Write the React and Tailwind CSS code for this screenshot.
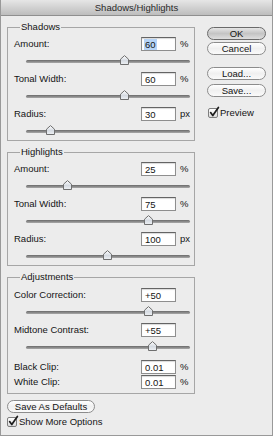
import clsx from "clsx";

const sections = [
  {
    title: "Shadows",
    rows: [
      { label: "Amount:", value: "60", unit: "%", pos: 0.6, selected: true },
      { label: "Tonal Width:", value: "60", unit: "%", pos: 0.6 },
      { label: "Radius:", value: "30", unit: "px", pos: 0.147 },
    ],
  },
  {
    title: "Highlights",
    rows: [
      { label: "Amount:", value: "25", unit: "%", pos: 0.25 },
      { label: "Tonal Width:", value: "75", unit: "%", pos: 0.75 },
      { label: "Radius:", value: "100", unit: "px", pos: 0.497 },
    ],
  },
];

const Thumb = () => (
  <svg width="9" height="10" viewBox="0 0 9 10">
    <defs>
      <linearGradient id="thumbFill" x1="0" y1="0" x2="0" y2="1">
        <stop offset="0" stopColor="#ffffff" />
        <stop offset="0.55" stopColor="#d6dbe2" />
        <stop offset="1" stopColor="#eef1f4" />
      </linearGradient>
    </defs>
    <path
      d="M0.5 9.5 V4.2 L4.5 0.6 L8.5 4.2 V9.5 Z"
      fill="url(#thumbFill)"
      stroke="#6f6f6f"
      strokeWidth="1"
      strokeLinejoin="round"
    />
  </svg>
);

const Slider = ({ pos, className }) => (
  <div className={clsx("relative ml-[12px] w-[164px] pt-[9px]", className)}>
    <div className="h-[3px] rounded-full bg-linear-to-b from-[#6a6a6a] to-[#a9a9a9]" />
    <div
      className="absolute top-[4px] flex"
      style={{ left: Math.round(pos * 163) - 4 }}
    >
      <Thumb />
    </div>
  </div>
);

const Field = ({ label, value, unit, selected }) => (
  <div className="flex h-[14px] items-center">
    <span className="w-[127px] leading-none">{label}</span>
    <div className="flex h-[14px] w-[35px] items-center border border-[#8e8e8e] border-t-[#646464] bg-white pl-[2px] shadow-[inset_0_1px_1px_rgba(0,0,0,0.15)]">
      <span className={clsx("px-[1px] leading-[11px]", selected && "bg-[#b6d4f7]")}>
        {value}
      </span>
    </div>
    {unit && <span className="ml-[4px] leading-none">{unit}</span>}
  </div>
);

const Group = ({ title, children, className }) => (
  <div className={clsx("relative flex w-[188px] flex-col border border-[#a6a6a6]", className)}>
    <span className="absolute -top-[7px] left-[12px] bg-[#ececec] px-[1px] leading-[12px]">
      {title}
    </span>
    {children}
  </div>
);

const Checkbox = () => (
  <div className="relative h-[10px] w-[10px] shrink-0 rounded-[2px] border border-[#7e7e7e] bg-linear-to-b from-[#ffffff] to-[#dcdcdc]">
    <svg
      className="absolute -left-[1px] -top-[3px]"
      width="12"
      height="12"
      viewBox="0 0 12 12"
    >
      <path
        d="M2.6 6.6 L4.8 9.6 L10.4 1.4"
        fill="none"
        stroke="#1e1e1e"
        strokeWidth="1.7"
        strokeLinecap="round"
        strokeLinejoin="round"
      />
    </svg>
  </div>
);

const AquaButton = ({ children, primary, className }) => (
  <div
    className={clsx(
      "flex h-[13px] items-center justify-center rounded-full border leading-none",
      primary
        ? "border-[#6a6a6a] bg-linear-to-b from-[#e6e6e6] via-[#c4c4c4] to-[#dedede]"
        : "border-[#8c8c8c] bg-linear-to-b from-[#ffffff] via-[#f0f0f0] to-[#fafafa]",
      className
    )}
  >
    {children}
  </div>
);

export default function App() {
  return (
    <div className="flex h-[436px] w-[273px] flex-col border-x border-b border-[#999999] bg-[#ececec] font-['Liberation_Sans',Arial,sans-serif] text-[9.5px] text-[#141414]">
      <div className="flex h-[16px] shrink-0 items-center justify-center border-b border-[#8f8f8f] bg-linear-to-b from-[#e6e6e6] to-[#bdbdbd] leading-none text-[#2a2a2a]">
        Shadows/Highlights
      </div>

      <div className="flex">
        <div className="ml-[6px] flex flex-col">
          {sections.map((s) => (
            <Group key={s.title} title={s.title} className="mt-[11px] pl-[6px] pt-[9px]">
              {s.rows.map((r, j) => (
                <div key={r.label} className="flex flex-col">
                  <Field {...r} />
                  <Slider
                    pos={r.pos}
                    className={j === s.rows.length - 1 ? "h-[19px]" : "h-[21px]"}
                  />
                </div>
              ))}
            </Group>
          ))}

          <Group title="Adjustments" className="mt-[11px] pb-[4px] pl-[6px] pt-[10px]">
            <Field label="Color Correction:" value="+50" />
            <Slider pos={0.75} className="h-[21px]" />
            <Field label="Midtone Contrast:" value="+55" />
            <Slider pos={0.775} className="h-[21px]" />
            <div className="mt-[2px]">
              <Field label="Black Clip:" value="0.01" unit="%" />
            </div>
            <div className="mt-[1px]">
              <Field label="White Clip:" value="0.01" unit="%" />
            </div>
          </Group>

          <AquaButton className="mt-[6px] w-[88px]">Save As Defaults</AquaButton>

          <div className="mt-[4px] flex items-center gap-[2px]">
            <Checkbox />
            <span className="leading-none">Show More Options</span>
          </div>
        </div>

        <div className="ml-[12px] flex w-[59px] flex-col">
          <AquaButton primary className="mt-[11px]">OK</AquaButton>
          <AquaButton className="mt-[2px]">Cancel</AquaButton>
          <AquaButton className="mt-[12px]">Load...</AquaButton>
          <AquaButton className="mt-[4px]">Save...</AquaButton>
          <div className="mt-[11px] flex items-center gap-[2px] pl-[1px]">
            <Checkbox />
            <span className="leading-none">Preview</span>
          </div>
        </div>
      </div>
    </div>
  );
}
